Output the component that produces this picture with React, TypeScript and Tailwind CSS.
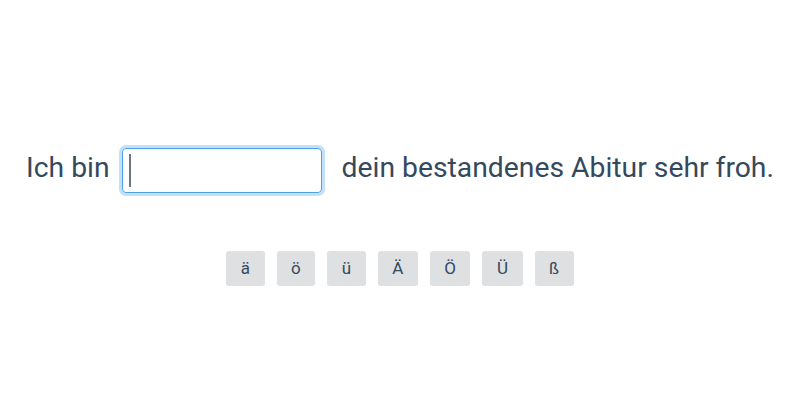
import { useState } from 'react'

const CHARS = ['ä', 'ö', 'ü', 'Ä', 'Ö', 'Ü', 'ß']

export default function App() {
  const [value, setValue] = useState('')

  return (
    <div
      className="w-[800px] h-[400px] bg-white text-[#34495e] flex flex-col items-center pt-[148px]"
      style={{ fontFamily: 'Roboto, "Noto Sans", sans-serif' }}
    >
      <div className="flex items-center text-[28.3px] leading-none">
        <span className="pb-[4px]">Ich bin</span>
        <div className="relative ml-[12px] mr-[20px]">
          <input
            autoFocus
            value={value}
            onChange={(e) => setValue(e.target.value)}
            className="block w-[200px] h-[45px] px-[7px] text-[28px] text-[#34495e] caret-[#5a6775] border border-[#4ba2e5] rounded-[4px] outline-none shadow-[0_0_0_3px_#c3e0fa]"
          />
          {value === '' && (
            <span className="absolute left-[7px] top-[6px] w-[2px] h-[33px] bg-[#6b7682] pointer-events-none" />
          )}
        </div>
        <span className="pb-[4px]">dein bestandenes Abitur sehr froh.</span>
      </div>
      <div className="flex gap-[12px] mt-[58px]">
        {CHARS.map(c => (
          <button
            key={c}
            onClick={() => setValue(v => v + c)}
            className="h-[35px] px-[14.5px] bg-[#dfe0e2] rounded-[3px] text-[17px] text-[#34495e]"
          >
            {c}
          </button>
        ))}
      </div>
    </div>
  )
}
